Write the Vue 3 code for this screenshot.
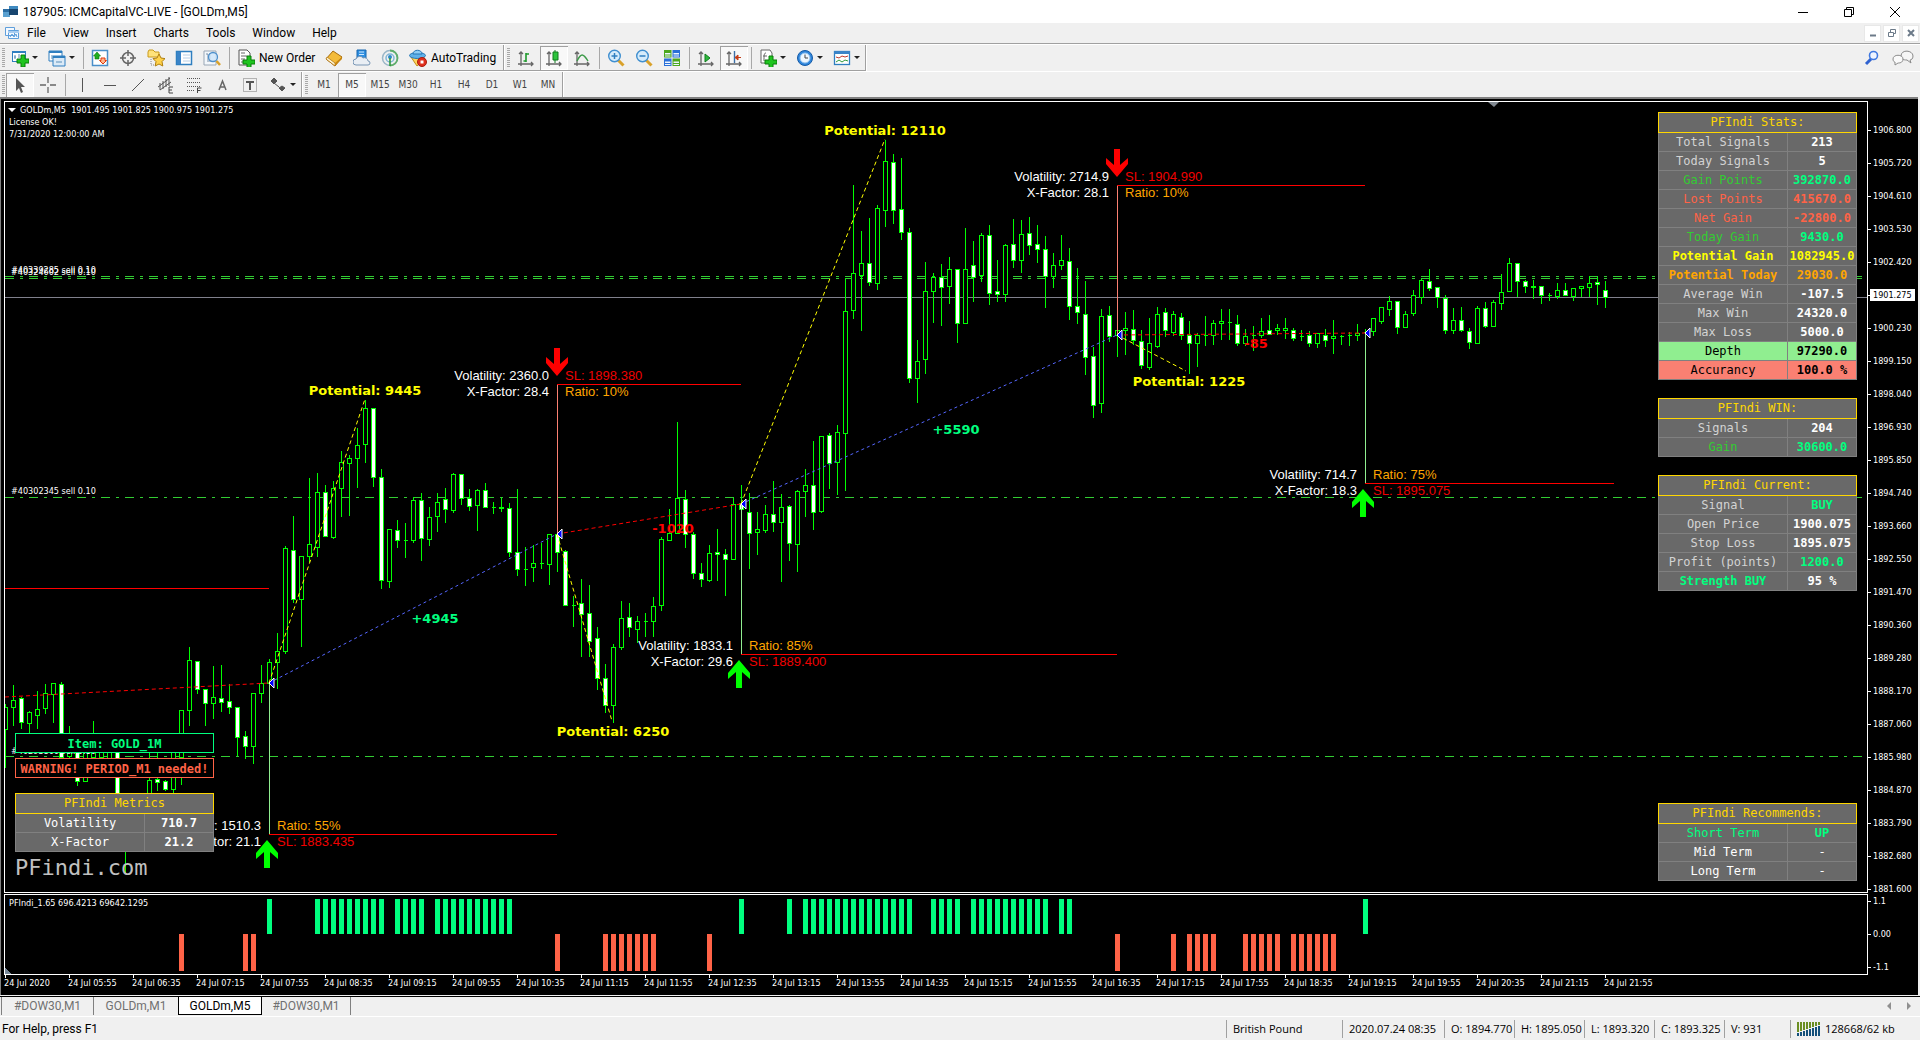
<script setup>
// Window chrome -------------------------------------------------------------
const menus = ['File', 'View', 'Insert', 'Charts', 'Tools', 'Window', 'Help']

const plus = '<path d="M10 7h4v4h4v4h-4v4h-4v-4H6v-4h4z" fill="#1fc41f" stroke="#0a7d0a"/>'
const axes = '<path d="M4 3v14M1 15h15M2 5l2-2 2 2M14 13l2 2-2 2" fill="none" stroke="#666" stroke-width="1.3"/>'
const icons = {
  newChart: '<rect x="1.5" y="2.500" width="13" height="10" fill="#fff" stroke="#2f7fc0"/><path d="M1 2h14v2H1z" fill="#2f7fc0"/><path d="M4 6v4M3 8h2M8 5v4" stroke="#5b8fb8"/><g transform="translate(0 -1)">' + plus + '</g>',
  profiles: '<path d="M1 2h13v10H1z" fill="#fff" stroke="#2f7fc0"/><path d="M1 2h13v2H1z" fill="#2f7fc0"/><path d="M5 7h12v10H5z" fill="#dbeaf7" stroke="#2f7fc0"/><path d="M5 7h12v2H5z" fill="#2f7fc0"/><path d="M4 6v4M8 13h6" stroke="#5b8fb8"/>',
  market: '<rect x="1.500" y="1.500" width="15" height="15" fill="#fff" stroke="#4a8fc9" stroke-width="1.500"/><path d="M6 3l3.500 4H8v3H4V7H2.500z" fill="#1fae1f" stroke="#0b7a0b" stroke-width=".6"/><path d="M12 15l3.500-3.500H14V9h-4v2.500H8.500z" fill="#ffb48a" stroke="#e0390c"/>',
  cross: '<circle cx="9" cy="9" r="5.500" fill="none" stroke="#666" stroke-width="1.500"/><path d="M9 1v6M9 11v6M1 9h6M11 9h6" stroke="#666" stroke-width="1.500"/>',
  navigator: '<path d="M1 3l1-2h4l2 2h4v5H1z" fill="#ffe27a" stroke="#c99a1c"/><path d="M4 10v6h4" fill="none" stroke="#888" stroke-dasharray="1 1"/><path d="M12 5l2 4 4 .6-3 3 .8 4.400L12 15l-3.800 2 .8-4.400-3-3 4-.6z" fill="#ffd24a" stroke="#b07f0e"/>',
  terminal: '<rect x="1.500" y="2.500" width="15" height="13" fill="#fff" stroke="#2f7fc0" stroke-width="1.500"/><path d="M2 3h4v12H2z" fill="#3a84c8"/><path d="M8 6h7M8 9h7M8 12h7" stroke="#b8cfe6"/>',
  tester: '<path d="M1 2h12v14H1z" fill="#f3f7fb" stroke="#9aa7b5"/><path d="M3 5h2v8M7 4v9" stroke="#7b90a8" fill="none"/><circle cx="10" cy="8" r="4.500" fill="#cfe6fa" fill-opacity=".85" stroke="#4e90cc" stroke-width="1.300"/><path d="M13.500 12l3.500 4" stroke="#d9a12a" stroke-width="2.500"/>',
  order: '<path d="M2 1h8l3 3v12H2z" fill="#fff" stroke="#555"/><path d="M4 4h4M4 7h6M4 10h4M4 13h2" stroke="#666"/>' + plus,
  gold: '<path d="M1 10l7-8 9 6-7 9z" fill="#f3bb3a" stroke="#a86c0c"/><path d="M1 10l9 7 0-3-8-6z" fill="#fff3cf" stroke="#a86c0c" stroke-width=".7"/><path d="M10 14l7-6v2l-7 7z" fill="#c98712"/>',
  cloud: '<path d="M4 1h9v9H4z" fill="#2f8fe0" stroke="#1767b0"/><path d="M6 3h5M6 5.500h5" stroke="#cfe8ff"/><path d="M3 16a3 3 0 0 1 0-6 4 4 0 0 1 7-1 3.500 3.500 0 0 1 5 3 2 2 0 0 1 0 4z" fill="#e9eef4" stroke="#7896b5"/>',
  signal: '<circle cx="9" cy="9" r="7.500" fill="none" stroke="#9ab7c8" stroke-width="1.500"/><path d="M9 1.500a7.500 7.500 0 0 1 0 15" fill="none" stroke="#5fae6a" stroke-width="1.800"/><circle cx="9" cy="9" r="4" fill="none" stroke="#7fb6d6" stroke-width="1.500"/><circle cx="9" cy="8" r="2" fill="#2d88c8"/><path d="M9 9v8" stroke="#2f9a3c" stroke-width="1.600"/>',
  auto: '<path d="M2 8l6 9 8-7-3-4z" fill="#ffd45c" stroke="#c08f1a"/><ellipse cx="8.500" cy="6.500" rx="8" ry="3" fill="#5fb1e8" stroke="#2676b4"/><path d="M4 5c0-5 9-5 9 0z" fill="#8fcdf5" stroke="#2676b4"/><circle cx="13" cy="13" r="4.500" fill="#e0301e" stroke="#a81c0e"/><path d="M11.500 11.500h3v3h-3z" fill="#fff"/>',
  bars: axes + '<path d="M9 4v9M9 5h3M6.500 12H9" stroke="#1f9a2d" stroke-width="1.600" fill="none"/>',
  candle: axes + '<path d="M10 1v13" stroke="#0f7d1d"/><path d="M8 3h5v8H8z" fill="#2cc43c" stroke="#0f7d1d"/>',
  line: axes + '<path d="M4 12c4-8 6-8 11 0" fill="none" stroke="#3c9a48" stroke-width="1.400"/>',
  zoomIn: '<path d="M11 11l5.500 5.500" stroke="#d9a12a" stroke-width="3"/><circle cx="7.500" cy="7" r="5.800" fill="#d6ecfb" stroke="#3f8fd0" stroke-width="1.400"/><path d="M7.500 4v6M4.500 7h6" stroke="#2f7fc0" stroke-width="1.500"/>',
  zoomOut: '<path d="M11 11l5.500 5.500" stroke="#d9a12a" stroke-width="3"/><circle cx="7.500" cy="7" r="5.800" fill="#d6ecfb" stroke="#3f8fd0" stroke-width="1.400"/><path d="M4.500 7h6" stroke="#2f7fc0" stroke-width="1.500"/>',
  tiles: '<path d="M1 1h7.500v7.500H1zM9.500 9.500H17V17H9.500z" fill="#4ca81c"/><path d="M9.500 1H17v7.500H9.500zM1 9.500h7.500V17H1z" fill="#2a6fd8"/><path d="M2 4h5.500v1.500H2zM2 6.500h5.500v1H2zM10.500 4H16v1.500h-5.500zM10.500 6.500H16v1h-5.500zM2 12.500h5.500V14H2zM2 15h5.500v1H2zM10.500 12.500H16V14h-5.500zM10.500 15H16v1h-5.500z" fill="#eef6ff"/>',
  scroll: axes + '<path d="M8 5l5 4-5 4z" fill="#2cb83c" stroke="#0f7d1d"/>',
  shift: axes + '<path d="M9.500 2v12" stroke="#3b6fa8" stroke-width="1.400"/><path d="M16 8.500h-5M13 6l-3 2.500 3 2.500z" fill="#e04a20" stroke="#c03a14"/>',
  indicators: '<path d="M2 1h9l2 3v10H2z" fill="#fff" stroke="#666"/><path d="M7 4c-2 0-2 2-2 8M4 7h4" stroke="#666" fill="none"/>' + plus,
  clock: '<circle cx="9" cy="9" r="7.500" fill="#2f86dc" stroke="#155aa6"/><circle cx="9" cy="9" r="5" fill="#eef7ff" stroke="#8fc0ee"/><path d="M9 5.500V9h3" stroke="#444" fill="none"/>',
  template: '<rect x="1.500" y="2.500" width="15" height="13" fill="#fff" stroke="#2f7fc0" stroke-width="1.300"/><path d="M1 2h16v3H1z" fill="#3a84c8"/><path d="M3 8l3 1 3-2 3 1 3-1" stroke="#c0392b" fill="none"/><path d="M3 13l3-2 3 2 3-2 3 1" stroke="#2f9a3c" fill="none"/>',
  cursor: '<path d="M5 2v13l3-3 2 5 2-1-2-5h4z" fill="#555"/>',
  plusLine: '<path d="M9 1v6M9 11v6M1 9h6M11 9h6" stroke="#666" stroke-width="1.300"/>',
  vline: '<path d="M9.500 2v14" stroke="#555"/>',
  hline: '<path d="M3 9.500h12" stroke="#555"/>',
  diag: '<path d="M3 15L15 3" stroke="#555"/>',
  channel: '<path d="M1 11L13 2M3 14L14 6M3 7v7M6 5v8M9 3v8M12 1v9" stroke="#555"/><path d="M12 11h4M12 14h3M12 17h4M12 11v6" stroke="#444" fill="none"/>',
  fibo: '<path d="M2 2.500h14M2 6.500h14M2 10.500h14M2 14.500h8" stroke="#555" stroke-dasharray="1 1"/><path d="M12.500 17v-5h4M12.500 14.500h3" stroke="#444" fill="none"/>',
  letterA: '<path d="M6 14L9.500 5 13 14M7 11h5" stroke="#666" stroke-width="1.500" fill="none"/>',
  letterT: '<rect x="2.500" y="2.500" width="13" height="13" fill="none" stroke="#777" stroke-dasharray="1 1"/><path d="M5 6h8M9 6v8" stroke="#555" stroke-width="2"/>',
  arrows: '<path d="M2 5l3-3 3 3-3 3zM5 7l5 4M10 12l3 3 3-3-3-2z" fill="#555" stroke="#555"/>',
}

const standardBar = [
  { icon: 'newChart', drop: true, label: 'New chart' },
  { icon: 'profiles', drop: true, label: 'Profiles' },
  { sep: true },
  { icon: 'market', label: 'Market Watch' },
  { icon: 'cross', label: 'Data Window' },
  { icon: 'navigator', label: 'Navigator' },
  { icon: 'terminal', label: 'Terminal' },
  { icon: 'tester', label: 'Strategy Tester' },
  { sep: true },
  { icon: 'order', text: 'New Order', label: 'New Order' },
  { icon: 'gold', label: 'MetaEditor' },
  { icon: 'cloud', label: 'Hosting' },
  { icon: 'signal', label: 'Signals' },
  { icon: 'auto', text: 'AutoTrading', label: 'AutoTrading' },
]
const chartBar = [
  { icon: 'bars', label: 'Bar chart' },
  { icon: 'candle', label: 'Candlesticks', on: true },
  { icon: 'line', label: 'Line chart' },
  { sep: true },
  { icon: 'zoomIn', label: 'Zoom in' },
  { icon: 'zoomOut', label: 'Zoom out' },
  { icon: 'tiles', label: 'Tile windows' },
  { sep: true },
  { icon: 'scroll', label: 'Auto scroll' },
  { icon: 'shift', label: 'Chart shift', on: true },
  { sep: true },
  { icon: 'indicators', drop: true, label: 'Indicators' },
  { icon: 'clock', drop: true, label: 'Periods' },
  { icon: 'template', drop: true, label: 'Templates' },
]
const drawBar = [
  { icon: 'cursor', label: 'Cursor', on: true },
  { icon: 'plusLine', label: 'Crosshair' },
  { sep: true },
  { icon: 'vline', label: 'Vertical line' },
  { icon: 'hline', label: 'Horizontal line' },
  { icon: 'diag', label: 'Trendline' },
  { icon: 'channel', label: 'Equidistant channel' },
  { icon: 'fibo', label: 'Fibonacci retracement' },
  { icon: 'letterA', label: 'Text' },
  { icon: 'letterT', label: 'Text label' },
  { icon: 'arrows', drop: true, label: 'Arrows' },
]
const periods = ['M1', 'M5', 'M15', 'M30', 'H1', 'H4', 'D1', 'W1', 'MN']

// Price chart ---------------------------------------------------------------
// One candle per 8px slot: high, body top, body bottom, low; 1 = falling candle
const candles = [
  [703,707,729,767],[684,700,707,725],[696,698,722,728,1],[710,712,723,733],[690,709,715,728],[683,693,708,713],[682,683,694,722],[681,684,757,757,1],
  [725,735,756,758],[745,750,781,785,1],[740,750,781,781],[720,738,757,758],[738,745,757,760],[740,746,760,764],[750,752,797,800,1],[800,810,840,873],
  [795,800,830,840],[792,798,810,815],[750,780,797,800],[745,779,782,790,1],[779,781,789,790,1],[745,752,789,793],[709,710,757,784],[646,660,710,725],
  [660,661,689,693,1],[689,689,703,725,1],[665,697,703,718],[664,698,702,711,1],[683,701,707,713,1],[706,707,737,755,1],[730,736,746,758,1],[693,693,746,763],
  [664,683,693,702],[658,662,683,683],[632,651,662,688],[545,548,651,653],[515,550,599,602,1],[556,556,599,646],[477,544,556,561],[472,492,547,556],
  [484,492,536,536,1],[480,488,537,538],[450,462,488,516],[454,458,463,515],[427,445,458,487],[399,408,444,462],[407,408,477,486,1],[468,477,580,588,1],
  [528,529,581,587],[519,530,540,547,1],[522,540,540,557],[496,500,540,542],[492,500,538,560,1],[506,517,539,545],[492,502,516,531],[487,499,509,522,1],
  [472,474,510,512],[474,474,498,504,1],[488,498,506,510,1],[488,490,505,530],[482,490,507,507,1],[501,507,507,513],[497,507,508,511],[502,508,552,556,1],
  [488,552,569,575,1],[546,569,569,585],[544,563,567,581],[542,563,563,568],[534,534,564,584],[531,534,552,571,1],[549,551,605,605,1],[595,605,605,626],
  [578,603,614,656,1],[584,613,641,656,1],[626,638,678,689,1],[663,678,705,712,1],[643,647,705,722],[600,618,647,649],[602,617,627,636,1],[615,621,629,642],
  [612,621,621,636],[596,606,621,636],[536,539,605,610],[508,533,540,540],[421,498,533,533],[489,499,534,547,1],[531,534,573,578,1],[562,573,579,586,1],
  [544,553,580,581],[528,552,554,580,1],[548,554,559,595,1],[497,504,559,559],[484,503,509,509,1],[492,512,533,568,1],[511,529,532,554],[504,514,530,532],
  [480,514,522,531,1],[493,507,522,581],[504,506,543,560,1],[489,491,544,571],[468,485,491,516],[440,485,512,529,1],[436,436,511,512],[432,435,463,488,1],
  [424,432,462,494],[277,311,433,490],[184,273,310,318],[230,263,275,330],[217,263,282,285,1],[204,208,283,289],[139,161,210,226],[153,162,210,223,1],
  [157,209,232,239,1],[227,232,378,382,1],[339,361,378,402],[261,291,359,373],[272,277,291,322],[263,277,287,325,1],[256,269,286,303],[269,269,323,342,1],
  [227,269,323,323],[240,265,277,301,1],[232,235,275,281],[224,235,293,304,1],[259,291,294,301,1],[243,245,294,301],[218,244,260,267,1],[219,234,260,272],
  [216,233,245,254,1],[224,244,249,262,1],[235,249,276,307,1],[252,265,276,287],[234,260,265,269],[247,261,306,319,1],[267,306,312,323,1],[280,314,357,374,1],
  [346,356,405,417,1],[308,316,403,412],[305,315,336,341,1],[309,330,335,356],[311,328,330,354],[309,329,340,344,1],[329,341,365,368,1],[317,343,367,369],
  [306,314,346,347],[307,312,330,336,1],[310,314,332,335],[312,317,335,339,1],[320,335,343,373,1],[332,335,343,366],[315,335,335,345],[319,323,335,344],
  [308,321,323,339],[308,322,322,339],[314,324,343,345,1],[328,336,343,345],[325,335,335,350],[317,331,335,337],[314,330,334,334,1],[323,328,330,334],
  [317,328,330,338],[327,330,338,340,1],[329,336,336,340],[330,335,343,346,1],[332,333,343,347],[328,335,340,346,1],[319,336,338,353],[334,336,336,344],
  [331,335,335,345],[323,333,335,340],[328,332,332,333],[318,318,331,335],[307,307,321,323],[295,301,309,315],[301,301,327,333,1],[310,314,327,327],
  [289,295,313,315],[278,280,297,303],[268,281,288,290,1],[286,287,297,307,1],[294,298,330,333,1],[307,320,330,333],[306,320,330,331,1],[327,331,342,348,1],
  [305,308,343,343],[301,308,326,327,1],[299,302,326,326],[273,292,303,309],[257,263,291,291],[263,263,281,296,1],[279,281,286,292,1],[279,286,287,298],
  [286,286,295,303,1],[292,295,295,300],[282,290,296,298],[282,290,295,295,1],[287,288,296,300],[285,286,288,296],[275,283,287,296],[276,282,284,304,1],
  [280,290,297,307,1],
]
const slot = (i) => 5 + 8 * i
const candlePath = ([h, t, b, l], i) => {
  const x = slot(i)
  const body = t === b ? `M${x - 2} ${t}h4` : `M${x - 2} ${t}h4V${b}h-4z`
  return `M${x} ${h}V${t}M${x} ${b}V${l}${body}`
}

const orderLines = [276, 278, 497, 756]
const orders = [
  { y: 273, text: '#40339285 sell 0.10' },
  { y: 275, text: '#40324602 sell 0.10' },
  { y: 494, text: '#40302345 sell 0.10' },
  { y: 754, text: '#40293866 sell 0.10' },
]

// Signals: x of the bar, y of the stop-loss level, entry y, end of the stop line
const signals = [
  { x: 269, y: 834, entry: 683, end: 557, buy: true, vol: '1510.3', xf: '21.1', sl: '1883.435', ratio: 55 },
  { x: 557, y: 384, entry: 534, end: 741, buy: false, vol: '2360.0', xf: '28.4', sl: '1898.380', ratio: 10 },
  { x: 741, y: 654, entry: 504, end: 1117, buy: true, vol: '1833.1', xf: '29.6', sl: '1889.400', ratio: 85 },
  { x: 1117, y: 185, entry: 335, end: 1365, buy: false, vol: '2714.9', xf: '28.1', sl: '1904.990', ratio: 10 },
  { x: 1365, y: 483, entry: 333, end: 1614, buy: true, vol: '714.7', xf: '18.3', sl: '1895.075', ratio: 75 },
]
const links = [
  { d: 'M5 697L269 683', c: 'loss' },
  { d: 'M269 683L557 534', c: 'win' },
  { d: 'M557 534L741 504', c: 'loss' },
  { d: 'M741 504L1117 335', c: 'win' },
  { d: 'M1117 335L1365 333', c: 'loss' },
  { d: 'M269 683L365 399', c: 'best' },
  { d: 'M557 534L612 721', c: 'best' },
  { d: 'M741 504L885 139', c: 'best' },
  { d: 'M1117 335L1186 371', c: 'best' },
]
const notes = [
  { x: 365, y: 395, t: 'Potential: 9445', c: 'yellow' },
  { x: 613, y: 736, t: 'Potential: 6250', c: 'yellow' },
  { x: 885, y: 135, t: 'Potential: 12110', c: 'yellow' },
  { x: 1189, y: 386, t: 'Potential: 1225', c: 'yellow' },
  { x: 435, y: 623, t: '+4945', c: 'springgreen' },
  { x: 956, y: 434, t: '+5590', c: 'springgreen' },
  { x: 673, y: 533, t: '-1020', c: 'red' },
  { x: 1256, y: 348, t: '-85', c: 'red' },
]

const prices = ['1906.800', '1905.720', '1904.610', '1903.530', '1902.420', '1901.275', '1900.230', '1899.150', '1898.040', '1896.930', '1895.850', '1894.740', '1893.660', '1892.550', '1891.470', '1890.360', '1889.280', '1888.170', '1887.060', '1885.980', '1884.870', '1883.790', '1882.680', '1881.600']

const range = (a, b) => Array.from({ length: b - a + 1 }, (_, k) => a + k)
const ups = [33, ...range(39, 47), ...range(49, 52), ...range(54, 63), 92, 98, ...range(100, 113), ...range(116, 119), ...range(121, 130), 132, 133, 170]
const downs = [22, 30, 31, 69, ...range(75, 81), 88, 139, 146, ...range(148, 151), ...range(155, 159), ...range(161, 166)]

const times = ['2020', '05:55', '06:35', '07:15', '07:55', '08:35', '09:15', '09:55', '10:35', '11:15', '11:55', '12:35', '13:15', '13:55', '14:35', '15:15', '15:55', '16:35', '17:15', '17:55', '18:35', '19:15', '19:55', '20:35', '21:15', '21:55']

// Panels: label, value, label class, value class, row class ------------------
const statPanels = [
  { title: 'PFIndi Stats:', rows: [
    ['Total Signals', '213'],
    ['Today Signals', '5'],
    ['Gain Points', '392870.0', 'lime', 'spring'],
    ['Lost Points', '415670.0', 'tomato', 'tomato'],
    ['Net Gain', '-22800.0', 'tomato', 'tomato'],
    ['Today Gain', '9430.0', 'lime', 'spring'],
    ['Potential Gain', '1082945.0', 'yellow bold', 'yellow'],
    ['Potential Today', '29030.0', 'orange bold', 'orange'],
    ['Average Win', '-107.5'],
    ['Max Win', '24320.0'],
    ['Max Loss', '5000.0'],
    ['Depth', '97290.0', '', '', 'good'],
    ['Accurancy', '100.0 %', '', '', 'bad'],
  ] },
  { title: 'PFIndi WIN:', rows: [['Signals', '204'], ['Gain', '30600.0', 'lime', 'spring']] },
  { title: 'PFIndi Current:', rows: [
    ['Signal', 'BUY', '', 'spring'],
    ['Open Price', '1900.075'],
    ['Stop Loss', '1895.075'],
    ['Profit (points)', '1200.0', '', 'spring'],
    ['Strength BUY', '95 %', 'spring bold', ''],
  ] },
]
const recommendPanel = { title: 'PFIndi Recommends:', rows: [
  ['Short Term', 'UP', 'spring', 'spring'],
  ['Mid Term', '-', 'white', 'plain'],
  ['Long Term', '-', 'white', 'plain'],
] }
const metricsPanel = { title: 'PFIndi Metrics', rows: [['Volatility', '710.7', 'white'], ['X-Factor', '21.2', 'white']] }

const tabs = ['#DOW30,M1', 'GOLDm,M1', 'GOLDm,M5', '#DOW30,M1']
const quote = [
  ['British Pound', 'w-symbol'], ['2020.07.24 08:35', 'w-date'], ['O: 1894.770', 'w-price'], ['H: 1895.050', 'w-price'],
  ['L: 1893.320', 'w-price'], ['C: 1893.325', 'w-price'], ['V: 931', 'w-vol'],
]
</script>

<template>
  <div class="app">
    <header class="title">
      <svg class="logo" width="18" height="16" viewBox="0 0 18 16" aria-hidden="true">
        <path d="M1 5h7v8H1z" fill="#5aa0d0" /><path d="M1 5h7v3H1z" fill="#2b6da3" />
        <path d="M7 2h9v9H7z" fill="#17456f" /><path d="M7 2h9v3H7z" fill="#3f8ac0" />
      </svg>
      <span class="caption">187905: ICMCapitalVC-LIVE - [GOLDm,M5]</span>
      <div class="controls">
        <button aria-label="Minimize"><svg width="12" height="12"><path d="M1 6.500h10" /></svg></button>
        <button aria-label="Restore"><svg width="12" height="12"><path d="M1.500 3.500h7v7h-7zM3.500 3.500v-2h7v7h-2" /></svg></button>
        <button aria-label="Close"><svg width="12" height="12"><path d="M1 1l10 10M11 1L1 11" /></svg></button>
      </div>
    </header>

    <nav class="menu">
      <svg class="doc" width="14" height="14" viewBox="0 0 14 14" aria-hidden="true">
        <path d="M.5 1.500h9v8h-9zM3.500 4.500h10v8h-10z" fill="#f4f9ff" stroke="#5f9fdc" /><path d="M3 5h11v2H3z" fill="#a9cdf0" /><path d="M5 11l2-3 2 3 2-3 1 3" fill="none" stroke="#5f9fdc" />
      </svg>
      <button v-for="m in menus" :key="m">{{ m }}</button>
      <div class="mdi">
        <button aria-label="Minimize chart"><svg width="10" height="10"><path d="M2 7.500h6" /></svg></button>
        <button aria-label="Restore chart"><svg width="10" height="10"><path class="thin" d="M1.500 4.500h5v4h-5zM3.500 4V1.500h5v4H7" /></svg></button>
        <button aria-label="Close chart"><svg width="10" height="10"><path d="M2 2l6 6M8 2L2 8" /></svg></button>
      </div>
    </nav>

    <div class="toolrow">
      <div class="strip first">
        <i class="grip"></i>
        <template v-for="(b, k) in standardBar" :key="k">
          <i v-if="b.sep" class="sep"></i>
          <button v-else class="tool" :class="{ drop: b.drop, wide: b.text }" :aria-label="b.label">
            <svg width="18" height="18" viewBox="0 0 18 18" v-html="icons[b.icon]"></svg>
            <span v-if="b.text">{{ b.text }}</span>
          </button>
        </template>
      </div>
      <div class="strip">
        <i class="grip"></i>
        <template v-for="(b, k) in chartBar" :key="k">
          <i v-if="b.sep" class="sep"></i>
          <button v-else class="tool" :class="{ drop: b.drop, on: b.on }" :aria-label="b.label">
            <svg width="18" height="18" viewBox="0 0 18 18" v-html="icons[b.icon]"></svg>
          </button>
        </template>
      </div>
      <div class="right">
        <button aria-label="Search"><svg width="16" height="16" viewBox="0 0 16 16"><path d="M2 14l5-5" stroke="#2f62d0" stroke-width="3" /><circle cx="9.500" cy="5.500" r="4" fill="#eef4ff" stroke="#3f78e0" stroke-width="1.600" /></svg></button>
        <button aria-label="Chat"><svg width="22" height="16" viewBox="0 0 22 16"><path d="M9 6c0-7 12-6 12 0 0 3-2 4-3 4l1 3-4-3c-4 0-6-1-6-4z" fill="#f6f6f6" stroke="#8a8a8a" /><path d="M1 9c0-5 10-5 10 0 0 4-4 4-5 4l-3 2v-3c-1 0-2-1-2-3z" fill="#fafafa" stroke="#8a8a8a" /></svg></button>
      </div>
    </div>
    <div class="toolrow second">
      <div class="strip">
        <i class="grip"></i>
        <template v-for="(b, k) in drawBar" :key="k">
          <i v-if="b.sep" class="sep"></i>
          <button v-else class="tool" :class="{ drop: b.drop, on: b.on }" :aria-label="b.label">
            <svg width="18" height="18" viewBox="0 0 18 18" v-html="icons[b.icon]"></svg>
          </button>
        </template>
      </div>
      <div class="strip">
        <i class="grip"></i>
        <button v-for="p in periods" :key="p" class="tool period" :class="{ on: p === 'M5' }">{{ p }}</button>
      </div>
    </div>

    <main class="workspace">
      <div class="plots">
        <section class="plot">
          <svg class="canvas" height="790" width="100%">
            <g transform="translate(-5 -102)">
              <g class="crisp">
                <path d="M5 297.500H4000" stroke="#80808c" />
                <path v-for="y in orderLines" :key="y" class="order" :d="`M5 ${y}.5H4000`" />
              </g>
              <g class="crisp candles" transform="translate(.5 .5)">
                <path v-for="(c, i) in candles" :key="i" :d="candlePath(c, i)" :class="{ fall: c[4] }" />
              </g>
              <path class="crisp" d="M5 588.500H269" stroke="red" />
              <g v-for="s in signals" :key="s.x">
                <path class="crisp" :d="`M${s.x}.5 ${s.entry}V${s.y}`" :stroke="s.buy ? 'lightgreen' : 'salmon'" />
                <path class="crisp" :d="`M${s.x} ${s.y}.5H${s.end}`" stroke="red" />
              </g>
              <path v-for="l in links" :key="l.d" :d="l.d" class="link" :class="l.c" />
              <path v-for="s in signals" :key="s.x" :d="`M${s.x} ${s.entry}l5 -5v10z`" fill="#0000ff" stroke="#fff" />
              <g v-for="s in signals" :key="s.x" class="siglabel">
                <text :x="s.x - 8" :y="s.y - 4" text-anchor="end">Volatility: {{ s.vol }}</text>
                <text :x="s.x - 8" :y="s.y + 12" text-anchor="end">X-Factor: {{ s.xf }}</text>
                <text :x="s.x + 8" :y="s.buy ? s.y + 12 : s.y - 4" class="sl">SL: {{ s.sl }}</text>
                <text :x="s.x + 8" :y="s.buy ? s.y - 4 : s.y + 12" class="ratio">Ratio: {{ s.ratio }}%</text>
                <path v-if="s.buy" :transform="`translate(${s.x - 13} ${s.y + 6})`" d="M8 28h6V12l8 7v-6L11 0 0 13v6l8-7z" fill="#00ff00" />
                <path v-else :transform="`translate(${s.x - 11} ${s.y - 36})`" d="M8 0h6v16l8-7v6L11 28 0 15V9l8 7z" fill="red" />
              </g>
              <text v-for="n in notes" :key="n.t" class="note" :x="n.x" :y="n.y" :fill="n.c" text-anchor="middle">{{ n.t }}</text>
              <text v-for="o in orders" :key="o.text" class="ordertext" x="11" :y="o.y">{{ o.text }}</text>
              <path d="M1488 102h11l-5 5z" fill="#808890" />
            </g>
          </svg>

          <div class="quote">
            <p class="sym"><svg width="8" height="5" aria-hidden="true"><path d="M0 0h8L4 4z" fill="#fff" /></svg><span>GOLDm,M5&nbsp; 1901.495 1901.825 1900.975 1901.275</span></p>
            <p>License OK!</p>
            <p>7/31/2020 12:00:00 AM</p>
          </div>

          <div class="left-panels">
            <p class="box item">Item: GOLD_1M</p>
            <p class="box warn">WARNING! PERIOD_M1 needed!</p>
            <table class="panel">
              <colgroup><col /><col class="vcol" /></colgroup>
              <thead><tr><th colspan="2">{{ metricsPanel.title }}</th></tr></thead>
              <tbody><tr v-for="r in metricsPanel.rows" :key="r[0]"><td :class="r[2]">{{ r[0] }}</td><td class="val">{{ r[1] }}</td></tr></tbody>
            </table>
            <a class="site" href="#">PFindi.com</a>
          </div>

          <div class="right-panels">
            <table v-for="p in statPanels" :key="p.title" class="panel">
              <colgroup><col /><col class="vcol" /></colgroup>
              <thead><tr><th colspan="2">{{ p.title }}</th></tr></thead>
              <tbody><tr v-for="r in p.rows" :key="r[0]" :class="r[4]"><td :class="r[2]">{{ r[0] }}</td><td class="val" :class="r[3]">{{ r[1] }}</td></tr></tbody>
            </table>
          </div>
          <div class="right-panels low">
            <table class="panel">
              <colgroup><col /><col class="vcol" /></colgroup>
              <thead><tr><th colspan="2">{{ recommendPanel.title }}</th></tr></thead>
              <tbody><tr v-for="r in recommendPanel.rows" :key="r[0]"><td :class="r[2]">{{ r[0] }}</td><td class="val" :class="r[3]">{{ r[1] }}</td></tr></tbody>
            </table>
          </div>
        </section>

        <section class="plot indicator">
          <svg class="canvas" height="79" width="100%">
            <g transform="translate(-5 -895)" class="crisp">
              <rect v-for="i in ups" :key="i" :x="slot(i) - 2" y="899" width="5" height="35" fill="springgreen" />
              <rect v-for="i in downs" :key="i" :x="slot(i) - 2" y="934" width="5" height="37" fill="tomato" />
              <path d="M5 968l6 6H5z" fill="#778899" />
            </g>
          </svg>
          <p class="ind-name">PFIndi_1.65 696.4213 69642.1295</p>
        </section>

        <div class="times"><span v-for="t in times" :key="t">24 Jul {{ t }}</span></div>
      </div>

      <div class="prices">
        <p v-for="(p, i) in prices" :key="p" :class="{ now: i === 5 }"><i></i><span>{{ p }}</span></p>
        <p class="tight"><i></i><span>1.1</span></p>
        <p><i></i><span>0.00</span></p>
        <p><i></i><span>-1.1</span></p>
      </div>
    </main>

    <div class="tabs">
      <button v-for="(t, i) in tabs" :key="i" :class="{ active: i === 2, line: i !== 1 }">{{ t }}</button>
      <div class="arrows">
        <button aria-label="Scroll left"><svg width="5" height="8"><path d="M4 0v8L0 4z" fill="#909090" /></svg></button>
        <button aria-label="Scroll right"><svg width="5" height="8"><path d="M1 0v8l4-4z" fill="#909090" /></svg></button>
      </div>
    </div>

    <footer class="status">
      <span class="help">For Help, press F1</span>
      <span v-for="q in quote" :key="q[0]" class="cell" :class="q[1]">{{ q[0] }}</span>
      <span class="cell w-net">
        <svg width="24" height="14" viewBox="0 0 24 14" aria-hidden="true">
          <path d="M1 0v10M4 0v9M7 0v8M10 0v7M13 0v6M16 0v5M19 0v4M22 0v3" stroke="#6b8e23" stroke-width="2" />
          <path d="M1 11v3M4 10v4M7 9v5M10 8v6M13 7v7M16 6v8M19 5v9M22 4v10" stroke="#14507a" stroke-width="2" />
        </svg>
        128668/62 kb
      </span>
    </footer>
  </div>
</template>

<style>
body { margin: 0; background: #f0f0f0; }
</style>

<style scoped>
.app { display: flex; flex-direction: column; min-height: 100vh; background: #f0f0f0; color: #000; font: 12px/16px Roboto, "Open Sans", sans-serif; overflow: hidden; }
button { border: 0; padding: 0; margin: 0; background: none; font: inherit; color: inherit; }
p { margin: 0; }

.title { display: flex; align-items: center; height: 23px; background: #fff; padding-left: 2px; }
.caption { margin-left: 3px; flex: 1; }
.controls { display: flex; padding-right: 2px; }
.controls button { width: 46px; height: 20px; display: grid; place-items: center; }
.controls svg path { fill: none; stroke: #000; }

.menu { display: flex; align-items: center; height: 20px; padding-left: 5px; gap: 17px; border-bottom: 1px solid #a0a0a0; }
.menu .doc { margin-right: -9px; }
.mdi { display: flex; gap: 2px; margin-left: auto; padding-right: 1px; }
.mdi button { width: 17px; height: 17px; background: #fff; display: grid; place-items: center; box-shadow: inset 0 0 0 1px #e8e8e8; }
.mdi path { fill: none; stroke: #6c7a89; stroke-width: 2; }
.mdi path.thin { stroke-width: 1; }

.toolrow { display: flex; height: 27px; box-sizing: border-box; border-top: 1px solid #fff; }
.toolrow.second { height: 26px; }
.strip { display: flex; align-items: center; box-sizing: border-box; border-right: 1px solid #a0a0a0; border-bottom: 1px solid #a0a0a0; box-shadow: 1px 0 #fff; }
.strip.first { width: 504px; }
.second .strip { border-bottom: 0; }
.grip { width: 3px; height: 20px; margin: 0 1px 0 2px; background: repeating-linear-gradient(#a8a8a8 0 1px, #f0f0f0 1px 2px); }
.strip + .strip .grip { margin: 0 2px 0 3px; }
.sep { width: 1px; height: 22px; margin: 0 2px 0 3px; background: #a8a8a8; }
.tool { width: 28px; height: 24px; display: flex; align-items: center; padding-left: 5px; box-sizing: border-box; flex: none; }
.tool.wide { width: 88px; gap: 4px; }
.tool.wide:last-child { width: 98px; }
.tool.drop { width: 37px; gap: 3px; }
.tool.drop::after { content: ""; border: 3px solid transparent; border-top-color: #222; border-bottom: 0; }
.tool.on { background: #f8f8f8; box-shadow: inset 1px 1px #a0a0a0, inset -1px -1px #fff; }
.tool.period { padding: 0; justify-content: center; font: 10px/12px "DejaVu Sans Condensed", "DejaVu Sans", sans-serif; color: #444; }
.right { display: flex; align-items: center; gap: 12px; margin-left: auto; padding-right: 6px; }
.right button { display: flex; }
.right svg { fill: none; }

.workspace { display: flex; background: #000; border: 2px solid #808080; border-width: 2px 0 0 1px; margin-right: 2px; padding: 2px 0 0 3px; color: #fff; font: 9px/12px "DejaVu Sans Condensed", "DejaVu Sans", sans-serif; }
.plots { flex: 1; min-width: 0; }
.plot { position: relative; border: 1px solid #fff; overflow: hidden; }
.plot.indicator { margin-top: 1px; }
.canvas { display: block; }
.crisp { shape-rendering: crispEdges; }
.order { stroke: limegreen; stroke-dasharray: 9 6 3 6; }
.candles path { fill: #000; stroke: #00ff00; }
.candles path.fall { fill: #fff; }
.link { fill: none; stroke-dasharray: 4 3; }
.loss { stroke: #ff0000; }
.win { stroke: #5566ff; stroke-dasharray: 3 3; }
.best { stroke: #ffff00; }
.siglabel { font: 13px "Liberation Sans", sans-serif; fill: #fff; }
.sl { fill: #f00000; }
.ratio { fill: orange; }
.note { font: bold 13px "DejaVu Sans", sans-serif; }
.ordertext { fill: #fff; }

.quote { position: absolute; left: 4px; top: 2px; }
.sym { display: flex; align-items: center; gap: 4px; }
.sym svg { margin-left: -1px; }
.ind-name { position: absolute; left: 4px; top: 2px; }

.left-panels { position: absolute; left: 10px; bottom: 10px; width: 199px; font: 12px/18px "DejaVu Sans Mono", monospace; }
.right-panels { position: absolute; right: 10px; top: 10px; width: 199px; font: 12px/18px "DejaVu Sans Mono", monospace; display: grid; gap: 18px; }
.right-panels.low { top: auto; bottom: 11px; }
.box { height: 18px; border: 1px solid; text-align: center; line-height: 20px; background: #000; font-weight: bold; white-space: nowrap; margin-bottom: 5px; }
.item { color: springgreen; }
.warn { color: tomato; margin-bottom: 15px; }
.panel { width: 199px; border-spacing: 0; border-collapse: separate; table-layout: fixed; background: #696969; color: #d3d3d3; }
.vcol { width: 70px; }
.panel th { height: 19px; line-height: 19px; padding: 0; border: 1px solid gold; color: gold; font-weight: normal; text-align: center; }
.panel td { height: 17px; line-height: 17px; padding: 1px 0 0; border-bottom: 1px solid #808080; border-left: 1px solid #808080; text-align: center; white-space: nowrap; }
.panel td.val { border-right: 1px solid #808080; color: #fff; font-weight: bold; }
.panel td.bold { font-weight: bold; }
.panel td.plain { font-weight: normal; }
.panel td.white { color: #fff; }
.panel td.lime { color: limegreen; }
.panel td.spring { color: springgreen; }
.panel td.tomato { color: tomato; }
.panel td.yellow { color: yellow; }
.panel td.orange { color: orange; }
.panel tr.good td { background: lightgreen; color: #000; }
.panel tr.bad td { background: salmon; color: #000; }
.site { display: block; margin-top: 2px; font-size: 22px; line-height: 28px; color: #c0c0c0; text-decoration: none; }

.times { display: flex; height: 20px; overflow: hidden; }
.times span { flex: none; width: 63px; margin-left: 1px; padding-top: 1px; text-indent: -1px; white-space: nowrap; line-height: 14px; background: linear-gradient(#fff, #fff) 0 0 / 1px 3px no-repeat; }

.prices { width: 50px; padding-top: 2px; }
.prices p { height: 33px; display: flex; align-items: flex-end; }
.prices p.tight { height: 12px; }
.prices i { width: 3px; height: 1px; background: #fff; margin-bottom: 5px; }
.prices span { margin-left: 2px; }
.prices p.now span { background: #fff; color: #000; margin-left: -1px; padding: 0 3px; }

.tabs { display: flex; height: 19px; border-top: 1px solid #000; margin-top: 1px; color: #707070; padding-left: 1px; }
.tabs button { height: 18px; display: flex; align-items: center; }
.tabs > button { width: 84px; justify-content: center; box-sizing: border-box; }
.tabs > button.line { border-right: 1px solid #808080; }
.tabs > button:first-child { width: 93px; border-left: 1px solid #808080; }
.tabs > button:nth-child(4) { width: 89px; }
.tabs > button.active { background: #fff; color: #000; border: 1px solid #000; border-top: 0; }
.arrows { display: flex; margin-left: auto; padding-right: 2px; }
.arrows button { padding: 0 7px; }

.status { display: flex; align-items: center; border-top: 1px solid #fff; flex: 1; }
.help { flex: 1; padding-left: 2px; }
.cell { box-sizing: border-box; border-left: 1px solid #a0a0a0; padding-left: 6px; height: 18px; display: flex; align-items: center; gap: 4px; white-space: nowrap; font: 11px/16px "Open Sans", "Noto Sans", sans-serif; }
.w-symbol { width: 116px; }
.w-date { width: 102px; }
.w-price { width: 70px; }
.w-vol { width: 66px; }
.w-net { width: 130px; }
</style>
